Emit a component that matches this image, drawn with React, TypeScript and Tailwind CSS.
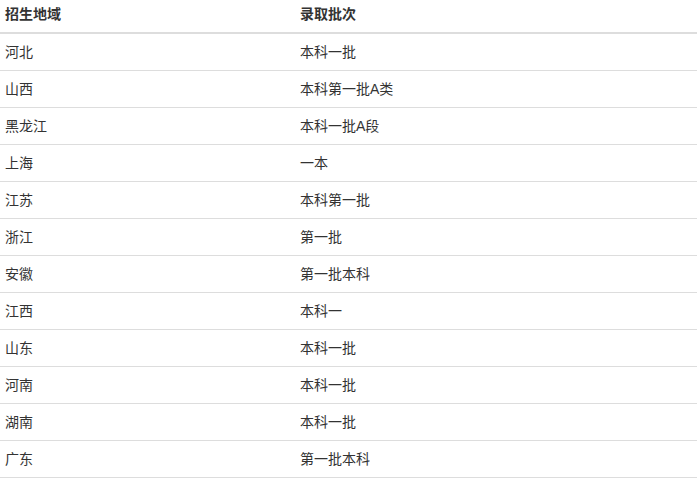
import React from "react";

const rows: [string, string][] = [
  ["河北", "本科一批"],
  ["山西", "本科第一批A类"],
  ["黑龙江", "本科一批A段"],
  ["上海", "一本"],
  ["江苏", "本科第一批"],
  ["浙江", "第一批"],
  ["安徽", "第一批本科"],
  ["江西", "本科一"],
  ["山东", "本科一批"],
  ["河南", "本科一批"],
  ["湖南", "本科一批"],
  ["广东", "第一批本科"],
];

export default function App() {
  return (
    <div
      className="w-[697px] bg-white text-[#333] text-[14px] leading-5"
      style={{ fontFamily: '"Liberation Sans", "Noto Sans CJK SC", sans-serif' }}
    >
      <table className="w-full border-collapse">
        <thead>
          <tr className="border-b-2 border-[#ddd]">
            <th className="w-[295px] pl-[5px] pt-1 pb-2 text-left font-bold">招生地域</th>
            <th className="pl-[5px] pt-1 pb-2 text-left font-bold">录取批次</th>
          </tr>
        </thead>
        <tbody>
          {rows.map(([region, batch]) => (
            <tr key={region + batch} className="border-b border-[#ddd]">
              <td className="pl-[5px] py-2">{region}</td>
              <td className="pl-[5px] py-2">{batch}</td>
            </tr>
          ))}
        </tbody>
      </table>
    </div>
  );
}
